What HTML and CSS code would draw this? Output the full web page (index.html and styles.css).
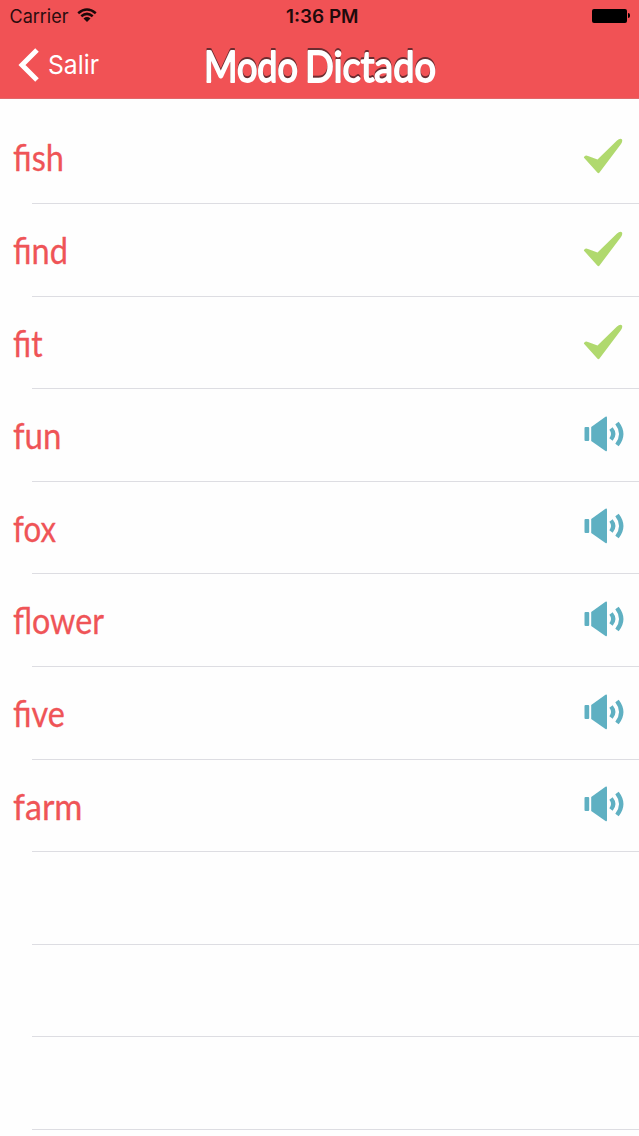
FILE: index.html
```html
<!DOCTYPE html>
<html lang="es">
<head>
<meta charset="utf-8">
<title>Modo Dictado</title>
<link rel="stylesheet" href="styles.css">
</head>
<body>
<svg class="defs" aria-hidden="true">
  <symbol id="check" viewBox="0 0 40 36"><path d="M.8 19.500Q2 16.500 5 18L14.500 21.500 34 2.500Q37-.2 38.800 1.300 40 2.800 38 6L16.500 34.500Q15.500 36 14.300 34.500Z"/></symbol>
  <symbol id="sound" viewBox="0 0 40 36"><rect x="0.500" y="11" width="4.700" height="14" rx="1"/><path d="M7.200 11 21.500.8Q23 0 23 2V34Q23 36 21.500 35L7.200 25Z"/><path class="wave" d="M27 12.500Q31.500 18 27 23.500M33 7Q41.500 18 33 29"/></symbol>
</svg>
<header class="header">
  <div class="status">
    <div class="carrier"><svg width="82" height="28"><text x="9.500" y="22.500" textLength="59" lengthAdjust="spacingAndGlyphs">Carrier</text></svg>
      <svg class="wifi" width="20" height="15" viewBox="0 0 20 15"><path class="arc" d="M1.200 5.200Q10-2.200 18.800 5.200M4.300 8.300Q10 3.500 15.700 8.300"/><path d="M6.500 10.500Q10 7.600 13.500 10.500L10 14Z"/></svg></div>
    <svg class="time" width="80" height="28"><text x="6" y="22.500" textLength="72.500" lengthAdjust="spacingAndGlyphs">1:36 PM</text></svg>
    <div class="battery"><span class="cell"></span><span class="tip"></span></div>
  </div>
  <nav class="nav">
    <a class="back"><svg width="22" height="34" viewBox="0 0 22 34"><path class="chevron" d="M19 2 4 17 19 32"/></svg><svg width="62" height="40"><text class="salir" x="8" y="26" textLength="51" lengthAdjust="spacingAndGlyphs">Salir</text></svg></a>
    <svg class="title" width="240" height="54"><text y="37"><tspan x="2" textLength="94" lengthAdjust="spacingAndGlyphs">Modo</tspan> <tspan x="103" textLength="131" lengthAdjust="spacingAndGlyphs">Dictado</tspan></text></svg>
  </nav>
</header>
<main class="list">
  <div class="row"><svg class="word"><text x="13" y="60" textLength="51" lengthAdjust="spacingAndGlyphs">fish</text></svg><svg class="icon check"><use href="#check"/></svg></div>
  <div class="row"><svg class="word"><text x="13" y="60" textLength="55" lengthAdjust="spacingAndGlyphs">find</text></svg><svg class="icon check"><use href="#check"/></svg></div>
  <div class="row"><svg class="word"><text x="13" y="60" textLength="29.500" lengthAdjust="spacingAndGlyphs">fit</text></svg><svg class="icon check"><use href="#check"/></svg></div>
  <div class="row"><svg class="word"><text x="13" y="60" textLength="48.500" lengthAdjust="spacingAndGlyphs">fun</text></svg><svg class="icon sound"><use href="#sound"/></svg></div>
  <div class="row"><svg class="word"><text x="13" y="60" textLength="43" lengthAdjust="spacingAndGlyphs">fox</text></svg><svg class="icon sound"><use href="#sound"/></svg></div>
  <div class="row"><svg class="word"><text x="13" y="60" textLength="91" lengthAdjust="spacingAndGlyphs">flower</text></svg><svg class="icon sound"><use href="#sound"/></svg></div>
  <div class="row"><svg class="word"><text x="13" y="60" textLength="52" lengthAdjust="spacingAndGlyphs">five</text></svg><svg class="icon sound"><use href="#sound"/></svg></div>
  <div class="row"><svg class="word"><text x="13" y="60" textLength="69.500" lengthAdjust="spacingAndGlyphs">farm</text></svg><svg class="icon sound"><use href="#sound"/></svg></div>
  <div class="row"></div>
  <div class="row"></div>
  <div class="row"></div>
</main>
</body>
</html>
```
FILE: styles.css
```css
* { box-sizing: border-box; }
body { margin: 0; height: 1136px; overflow: hidden; background: #fefefe; font-family: Inter, sans-serif; }
svg { display: block; flex: none; }
.defs { width: 0; height: 0; }
.header { height: 99px; background: #f15255; border-bottom: 1px solid #e2686a; }
.status { display: grid; grid-template-columns: 280px 80px 1fr; height: 32px; font-size: 18px; }
.carrier { display: flex; font-size: 18.500px; fill: #2b0c0e; }
.wifi { margin: 8px 0 0 -5px; fill: #1c0809; }
.arc { fill: none; stroke: #1c0809; stroke-width: 2.500; }
.time { font-weight: 600; fill: #200a0b; }
.battery { display: flex; align-items: center; justify-content: flex-end; gap: 1px; height: 15px; margin: 8px 9px 0 0; }
.cell { width: 35px; height: 14px; border-radius: 2px; background: #000; }
.tip { width: 2px; height: 5px; border-radius: 0 2px 2px 0; background: #000; }
.nav { display: grid; grid-template-columns: 202px 240px 1fr; height: 66px; padding-top: 13px; }
.back { display: flex; height: 40px; padding-left: 18px; padding-top: 3px; }
.chevron { fill: none; stroke: #fff; stroke-width: 5; }
.salir { font-size: 26px; fill: #fff; }
.title { overflow: visible; font: 400 42px Lato, sans-serif; fill: #fff; stroke: #fff; stroke-width: 1.800; stroke-linejoin: round; filter: drop-shadow(0 -1.200px 0 #6b2c30); }
.list { padding-top: 12.300px; }
.row { position: relative; display: flex; justify-content: space-between; height: 92.620px; }
.row::after { content: ""; position: absolute; left: 32px; right: 0; bottom: 0; height: 1px; background: #dddde2; }
.word { width: 160px; height: 90px; font: 400 36.500px Lato, sans-serif; fill: #ef5457; stroke: #ef5457; stroke-width: .3; stroke-linejoin: round; }
.icon { width: 40px; height: 36px; margin: 27px 16px 0 0; }
.check { fill: #b0d96e; }
.sound { fill: #5fb0c2; margin: 26.700px 15.500px 0 0; }
.wave { fill: none; stroke: #5fb0c2; stroke-width: 4.300; }
```
